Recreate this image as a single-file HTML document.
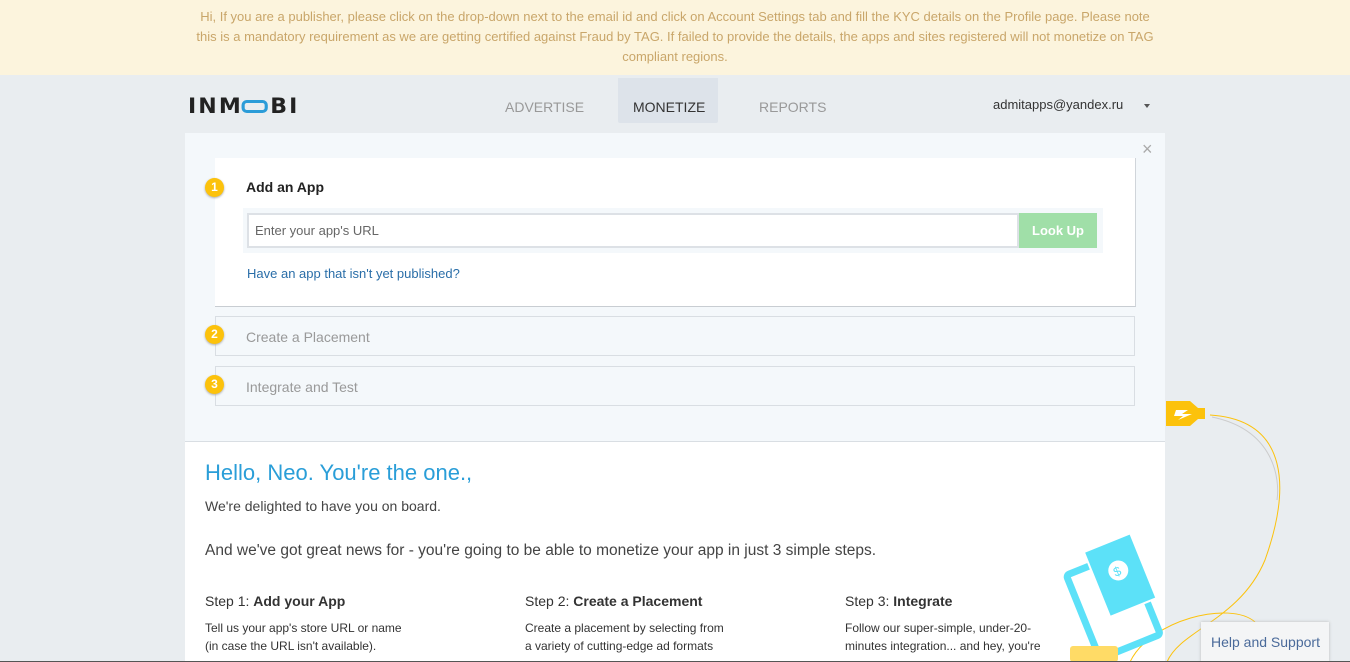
<!DOCTYPE html>
<html><head><meta charset="utf-8"><style>
*{margin:0;padding:0;box-sizing:border-box}
body{width:1350px;height:662px;overflow:hidden;background:#e9edf0;font-family:"Liberation Sans",sans-serif;position:relative}
.a{position:absolute}
.banner{left:0;top:0;width:1350px;height:75px;background:#fcf4dd;color:#c9a66a;font-size:13px;line-height:20px;text-align:center;padding-top:7px}
.nav{font-size:14px;color:#999}
.num{width:19px;height:19px;border-radius:50%;background:#fcc20c;color:#fff;font-size:12px;font-weight:bold;text-align:center;line-height:19px;box-shadow:0 1px 2px #aaa}
.step{border:1px solid #d9dee3;background:#f4f8fb;color:#999;font-size:14px}
.sh{font-size:14px;color:#333}
.sp{font-size:12px;color:#333;line-height:18px}
</style></head><body>
<div class="a banner">Hi, If you are a publisher, please click on the drop-down next to the email id and click on Account Settings tab and fill the KYC details on the Profile page. Please note<br>this is a mandatory requirement as we are getting certified against Fraud by TAG. If failed to provide the details, the apps and sites registered will not monetize on TAG<br>compliant regions.</div>

<div class="a" style="left:188px;top:95px;font-size:21px;font-weight:bold;letter-spacing:2px;color:#222;font-family:'DejaVu Sans',sans-serif;line-height:22px;transform:scaleX(1.05);transform-origin:left">IN<span style="letter-spacing:1px">M</span><span style="display:inline-block;width:25px;height:13px;border:3px solid #2b9cd8;border-radius:5px;vertical-align:0px;margin-right:2px"></span>BI</div>
<div class="a nav" style="left:505px;top:99px">ADVERTISE</div>
<div class="a" style="left:618px;top:78px;width:100px;height:45px;background:#dde3ea;border-radius:0 0 2px 2px"></div>
<div class="a nav" style="left:633px;top:99px;color:#333">MONETIZE</div>
<div class="a nav" style="left:759px;top:99px">REPORTS</div>
<div class="a" style="left:993px;top:97px;font-size:13px;color:#333">admitapps@yandex.ru</div>
<div class="a" style="left:1144px;top:104px;border:3.5px solid transparent;border-top:4px solid #555"></div>

<div class="a" style="left:185px;top:133px;width:980px;height:308px;background:#f4f8fb"></div>
<div class="a" style="left:185px;top:441px;width:980px;height:221px;background:#fff;border-top:1px solid #d9dee3"></div>
<div class="a" style="left:1142px;top:139px;font-size:18px;color:#aaa">×</div>

<div class="a" style="left:215px;top:158px;width:921px;height:149px;background:#fff;border-right:1px solid #d0d5da;border-bottom:1px solid #c8cdd2"></div>
<div class="a num" style="left:205px;top:178px">1</div>
<div class="a" style="left:246px;top:179px;font-size:14px;font-weight:bold;color:#222">Add an App</div>
<div class="a" style="left:243px;top:208px;width:860px;height:45px;background:#f4f8fb"></div>
<div class="a" style="left:247px;top:213px;width:772px;height:35px;background:#fff;border:2px solid #dde1e6;font-size:13px;color:#666;padding:8px 6px">Enter your app's URL</div>
<div class="a" style="left:1019px;top:213px;width:78px;height:35px;background:#a0dfa8;color:#fff;font-size:13px;font-weight:bold;text-align:center;line-height:35px">Look Up</div>
<div class="a" style="left:247px;top:266px;font-size:13px;color:#2a6ea8">Have an app that isn't yet published?</div>

<div class="a step" style="left:215px;top:316px;width:920px;height:40px"></div>
<div class="a num" style="left:205px;top:325px">2</div>
<div class="a" style="left:246px;top:329px;font-size:14px;color:#999">Create a Placement</div>
<div class="a step" style="left:215px;top:366px;width:920px;height:40px"></div>
<div class="a num" style="left:205px;top:375px">3</div>
<div class="a" style="left:246px;top:379px;font-size:14px;color:#999">Integrate and Test</div>

<div class="a" style="left:205px;top:460px;font-size:22px;color:#2a9ed8">Hello, Neo. You're the one.,</div>
<div class="a" style="left:205px;top:498px;font-size:14px;color:#444">We're delighted to have you on board.</div>
<div class="a" style="left:205px;top:542px;font-size:15.5px;color:#444">And we've got great news for - you're going to be able to monetize your app in just 3 simple steps.</div>

<div class="a sh" style="left:205px;top:593px">Step 1: <b>Add your App</b></div>
<div class="a sp" style="left:205px;top:619px">Tell us your app's store URL or name<br>(in case the URL isn't available).</div>
<div class="a sh" style="left:525px;top:593px">Step 2: <b>Create a Placement</b></div>
<div class="a sp" style="left:525px;top:619px">Create a placement by selecting from<br>a variety of cutting-edge ad formats</div>
<div class="a sh" style="left:845px;top:593px">Step 3: <b>Integrate</b></div>
<div class="a sp" style="left:845px;top:619px">Follow our super-simple, under-20-<br>minutes integration... and hey, you're</div>

<svg class="a" style="left:1040px;top:390px" width="310" height="272" viewBox="0 0 310 272">
<path d="M170 25 C 250 30, 250 100, 225 170 C 200 230, 140 240, 127 272" fill="none" stroke="#fcc20c" stroke-width="1"/>
<path d="M172 27 C 235 40, 240 90, 237 110" fill="none" stroke="#ccc" stroke-width="1"/>
<path d="M90 272 C 110 230, 190 210, 215 232" fill="none" stroke="#fcc20c" stroke-width="1"/>
<path d="M126 11 L150 11 L158 18 L165 18 L165 29 L158 29 L150 36 L126 36 Z" fill="#fcc20c"/>
<path d="M136 20 L148 20 L142 24 L152 24 L138 30 L143 26 L134 26 Z" fill="#fff"/>
<g transform="rotate(-22 70 200)">
<rect x="35" y="170" width="65" height="90" rx="3" fill="none" stroke="#5ce1f8" stroke-width="7"/>
<rect x="60" y="155" width="50" height="70" fill="#5ce1f8" stroke="#fff" stroke-width="2"/>
<circle cx="85" cy="185" r="10" fill="#fff"/><text x="80" y="190" font-size="13" fill="#5ce1f8" font-family="Liberation Sans">$</text>
</g>
<rect x="30" y="256" width="48" height="16" rx="3" fill="#ffdb66"/>
</svg>
<div class="a" style="left:1201px;top:622px;width:128px;height:40px;background:#f4f5f6;box-shadow:0 0 3px #bbb;color:#4a6a9a;font-size:14px;padding:12px 0 0 10px">Help and Support</div>
<div class="a" style="left:0;top:661px;width:1350px;height:1px;background:#555"></div>
</body></html>
